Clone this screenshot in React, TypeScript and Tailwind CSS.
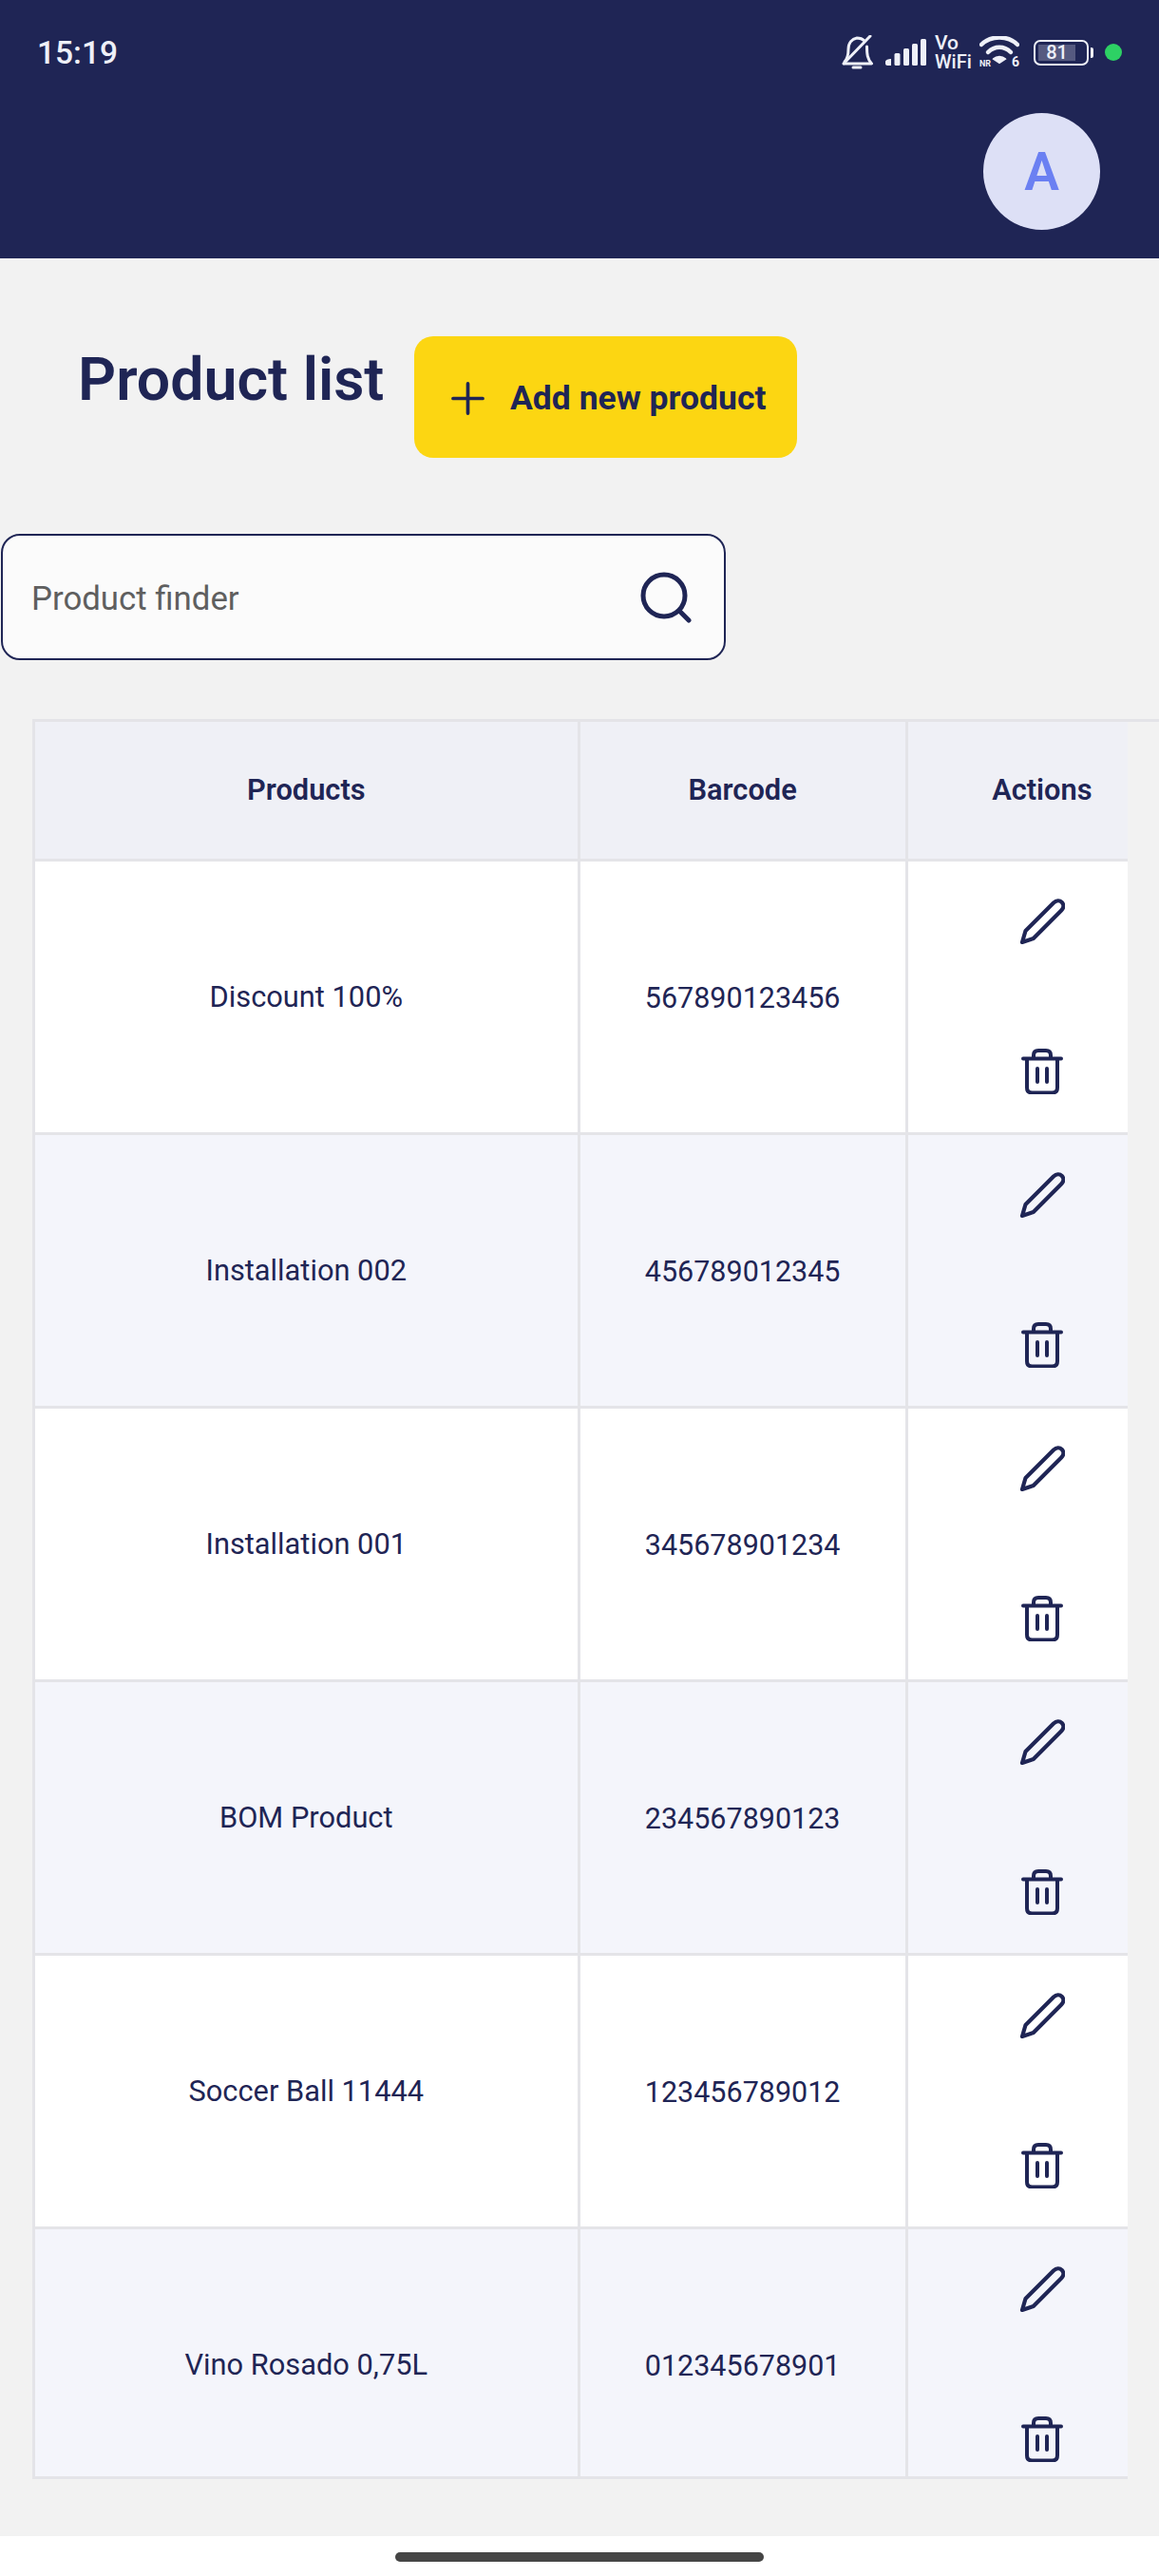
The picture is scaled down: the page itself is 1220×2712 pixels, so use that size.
const NAVY = "#1f2555";
const ICON = "#eef0f8";

const rows = [
  ["Discount 100%", "567890123456"],
  ["Installation 002", "456789012345"],
  ["Installation 001", "345678901234"],
  ["BOM Product", "234567890123"],
  ["Soccer Ball 11444", "123456789012"],
  ["Vino Rosado 0,75L", "012345678901"],
];

function Pencil() {
  return (
    <svg width="48" height="48" viewBox="0 0 48 48" fill="none" stroke={NAVY} strokeWidth="4.2" strokeLinejoin="round" strokeLinecap="round">
      <path d="M3 46 L6.5 34 L36 4.5 C39 1.7 42.5 1.7 44.8 4 C47 6.3 47 9.7 44.2 12.5 L14.8 42 Z" />
    </svg>
  );
}

function Trash() {
  return (
    <svg width="44" height="48" viewBox="0 0 44 48" fill="none" stroke={NAVY} strokeWidth="4" strokeLinecap="round" strokeLinejoin="round">
      <path d="M2 10.5 H42" />
      <path d="M13 10 V7 C13 3.5 15 2 18 2 H26 C29 2 31 3.5 31 7 V10" />
      <path d="M6 11 V41 C6 44.5 8 46.5 11.5 46.5 H32.5 C36 46.5 38 44.5 38 41 V11" />
      <path d="M17 21 V35" />
      <path d="M27 21 V35" />
    </svg>
  );
}

function StatusIcons() {
  return (
    <div className="flex items-center font-['Roboto',sans-serif] text-[#eef0f8]">
      <svg width="33" height="36" viewBox="0 0 33 36" fill="none" stroke={ICON} strokeWidth="3" strokeLinecap="round" strokeLinejoin="round" className="mr-[13px]">
        <path d="M30 1 L2 30" />
        <path d="M3 28 C6 25 7 21 7 15 C7 8 11 4 16 3 C19 3 22 4 24 6" />
        <path d="M26.5 12 C26.5 20 27 25 31.5 30 H3" />
        <path d="M12 34 H20" />
      </svg>
      <svg width="43" height="28" viewBox="0 0 43 28" fill={ICON} className="mr-[9px]">
        <path d="M0 24 C0 22 3 21 6 21 V28 H2 C1 28 0 27 0 26 Z" />
        <rect x="9.5" y="15" width="6" height="13" rx="1.5" />
        <rect x="19" y="10" width="6" height="18" rx="1.5" />
        <rect x="28" y="5" width="6" height="23" rx="1.5" />
        <rect x="37" y="0" width="6" height="28" rx="1.5" />
      </svg>
      <div className="mr-[9px] flex w-[38px] flex-col items-start text-[21px] leading-[20px] font-medium">
        <span>Vo</span>
        <span className="text-[20px]">WiFi</span>
      </div>
      <div className="relative mr-[15px] h-[34px] w-[42px]">
        <svg width="42" height="34" viewBox="0 0 42 34" fill="none" stroke={ICON} strokeLinecap="round">
          <path d="M2 9 C12 -1 30 -1 40 9" strokeWidth="4.5" />
          <path d="M9 17 C16 10 26 10 33 17" strokeWidth="4.5" />
          <path d="M15 24 C18 21 24 21 27 24 L21 28 Z" fill={ICON} strokeWidth="2" />
        </svg>
        <span className="absolute left-0 top-[24px] text-[9px] leading-[10px] font-bold">NR</span>
        <span className="absolute right-0 top-[20px] text-[14px] leading-[14px] font-bold">6</span>
      </div>
      <div className="mr-[2px] flex h-[27px] w-[58px] items-center rounded-[7px] border-[2.5px] border-[#eef0f8] pl-[3px]">
        <div className="flex h-[17px] w-[39px] items-center justify-center bg-[#565a80] text-[20px] font-medium">81</div>
      </div>
      <div className="mr-[12px] h-[11px] w-[3px] rounded-r-[2px] bg-[#eef0f8]" />
      <div className="h-[18px] w-[18px] rounded-full bg-[#2dd164]" />
    </div>
  );
}

export default function App() {
  return (
    <div className="relative flex h-[2712px] w-[1220px] flex-col overflow-hidden bg-white font-['Roboto',sans-serif]">
      <header className="h-[272px] shrink-0 bg-[#1f2555]">
        <div className="flex h-[110px] items-center justify-between pl-[39px] pr-[39px]">
          <span className="pt-[2px] text-[33.5px] font-medium text-[#eef0f8]">15:19</span>
          <StatusIcons />
        </div>
        <div className="flex justify-end pr-[62px] pt-[9px]">
          <div className="flex h-[123px] w-[123px] items-center justify-center rounded-full bg-[#dde0f6] pt-[2px] text-[55px] font-semibold text-[#6b80f2]">A</div>
        </div>
      </header>

      <main className="h-[2398px] shrink-0 overflow-hidden bg-[#f2f2f2]">
        <div className="flex items-start pt-[82px]">
          <h1 className="ml-[82px] mt-[1px] w-[323px] whitespace-nowrap text-[62.6px] leading-[90px] font-semibold text-[#1f2555]">Product list</h1>
          <button className="ml-[31px] flex h-[128px] w-[403px] items-center rounded-[20px] bg-[#fcd612] pl-[39px] pt-[3px] text-[35.5px] font-bold text-[#1f2555]">
            <svg width="35" height="35" viewBox="0 0 36 36" fill="none" stroke={NAVY} strokeWidth="3.8" strokeLinecap="round" className="mr-[27px]">
              <path d="M18 2 V34 M2 18 H34" />
            </svg>
            Add new product
          </button>
        </div>

        <div className="ml-px mt-[80px] flex h-[133px] w-[763px] items-center justify-between rounded-[20px] border-2 border-[#1f2555] bg-[#fbfbfb] pl-[30px] pr-[34px]">
          <span className="pt-[3px] text-[34.8px] text-[#5f5f5f]">Product finder</span>
          <svg width="54" height="54" viewBox="0 0 54 54" fill="none" stroke={NAVY} strokeWidth="5" strokeLinecap="round">
            <circle cx="25" cy="25" r="22" />
            <path d="M41 41 L51 51" />
          </svg>
        </div>

        <div className="ml-[34px] mt-[62px] border-t-[3px] border-[#e4e4e8]">
          <div className="h-[1850px] w-[1153px] overflow-hidden border-b-[3px] border-[#e4e4e8]">
            <div className="flex h-[144px] w-[1204px] border-l-[3px] border-[#e4e4e8] bg-[#eff0f6] text-[30.8px] font-semibold text-[#1f2555]">
              <div className="flex w-[575px] items-center justify-center border-r-[3px] border-[#e4e4e8]">Products</div>
              <div className="flex w-[346px] items-center justify-center border-r-[3px] border-[#e4e4e8]">Barcode</div>
              <div className="flex w-[283px] items-center justify-center">Actions</div>
            </div>
            {rows.map(([name, code], i) => (
              <div
                key={code}
                className={`flex h-[288px] w-[1204px] shrink-0 border-l-[3px] border-t-[3px] border-[#e4e4e8] text-[#1f2555] ${i % 2 === 0 ? "bg-white" : "bg-[#f4f5fb]"}`}
              >
                <div className="flex w-[575px] items-center justify-center border-r-[3px] border-[#e4e4e8] pt-[2px] text-[30.8px]">{name}</div>
                <div className="flex w-[346px] items-center justify-center border-r-[3px] border-[#e4e4e8] pt-[2px] text-[30.5px]">{code}</div>
                <div className="flex w-[283px] flex-col items-center gap-[110px] pt-[39px]">
                  <Pencil />
                  <Trash />
                </div>
              </div>
            ))}
          </div>
        </div>
      </main>

      <div className="flex flex-1 items-start justify-center bg-white pt-[17px]">
        <div className="h-[10px] w-[388px] rounded-full bg-[#454545]" />
      </div>
    </div>
  );
}
